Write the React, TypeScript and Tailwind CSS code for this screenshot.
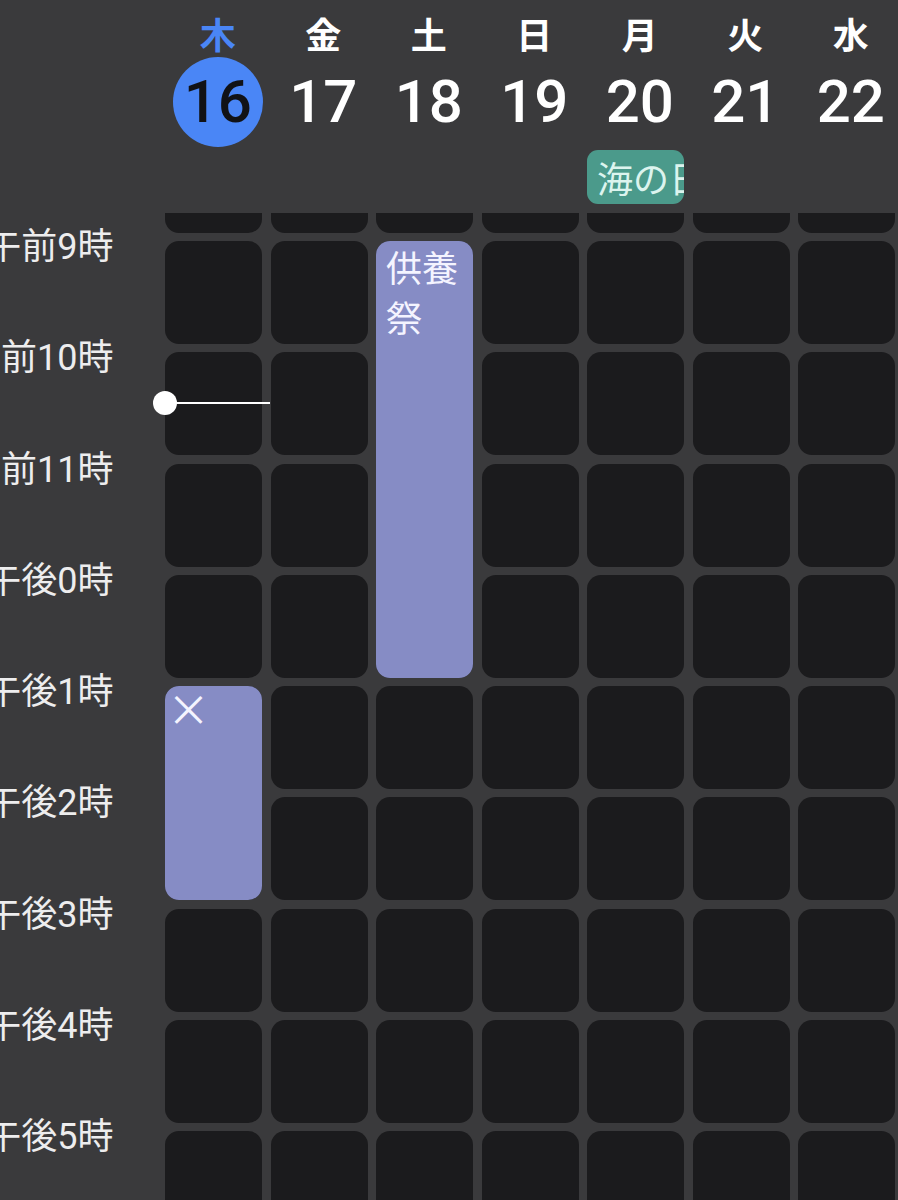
import React from "react"

// 週表示カレンダー（ダーク）
const DAYS = [
  { name: "木", date: 16, today: true },
  { name: "金", date: 17 },
  { name: "土", date: 18 },
  { name: "日", date: 19 },
  { name: "月", date: 20, holiday: "海の日" },
  { name: "火", date: 21 },
  { name: "水", date: 22 },
]

const HOURS = [
  "午前8時", "午前9時", "午前10時", "午前11時", "午後0時",
  "午後1時", "午後2時", "午後3時", "午後4時", "午後5時", "午後6時",
]

const JP = "font-['Roboto','Noto_Sans_CJK_JP',sans-serif]"

function DayHeader() {
  return (
    <div className="h-[213px] pl-[165px]">
      <div className="grid grid-cols-[repeat(7,105.5px)]">
        {DAYS.map((d) => (
          <div key={d.date} className="flex flex-col items-center">
            <div
              className={`mt-[13px] h-[40px] text-[36px] leading-[40px] font-bold font-['Noto_Sans_CJK_JP',sans-serif] ${
                d.today ? "text-[#4a86f6]" : "text-white"
              }`}
            >
              {d.name}
            </div>
            <div
              className={`mt-[4px] flex h-[90px] w-[90px] items-center justify-center rounded-full text-[60px] leading-[90px] font-medium font-['Roboto',sans-serif] ${
                d.today ? "bg-[#4a86f6] text-[#111216]" : "text-white"
              }`}
            >
              {d.date}
            </div>
          </div>
        ))}
      </div>
      <div className="mt-[3px] grid grid-cols-[repeat(7,105.5px)]">
        {DAYS.map((d) => (
          <div key={d.date} className="h-[54px]">
            {d.holiday && (
              <div className="h-[54px] w-[97px] overflow-hidden whitespace-nowrap rounded-[11px] bg-[#4b9a8b] pl-[10px] text-[36px] leading-[54px] text-[#dcf4ee] font-['Noto_Sans_CJK_JP',sans-serif]">
                {d.holiday}
              </div>
            )}
          </div>
        ))}
      </div>
    </div>
  )
}

function TimeGrid() {
  return (
    <div className="relative h-[987px] overflow-hidden">
      <div className="relative mt-[-83.25px]">
        <div className="grid grid-cols-[156.5px_repeat(7,97px)] auto-rows-[103px] gap-x-[8.5px] gap-y-[8.25px]">
          {HOURS.map((h) => (
            <React.Fragment key={h}>
              {/* はみ出した分は左へ */}
              <div className={`-mt-[14px] flex h-[40px] justify-end whitespace-nowrap pr-[43px] text-[36px] leading-[40px] text-[#ededee] ${JP}`}>
                <span className="shrink-0">{h}</span>
              </div>
              {DAYS.map((d) => (
                <div key={d.date} className="rounded-[14px] bg-[#1b1b1d]" />
              ))}
            </React.Fragment>
          ))}
        </div>

        {/* 予定 */}
        <div className="absolute inset-0 grid grid-cols-[156.5px_repeat(7,97px)] auto-rows-[103px] gap-x-[8.5px] gap-y-[8.25px]">
          <div className="col-start-4 row-start-2 row-span-4 overflow-hidden rounded-[14px] bg-[#868cc5] pl-[10px] pr-[8px] text-[36px] leading-[50px] text-[#f4f4ff] font-['Noto_Sans_CJK_JP',sans-serif]">
            供養祭
          </div>
          <div className="col-start-2 row-start-6 row-span-2 overflow-hidden rounded-[14px] bg-[#868cc5] pl-[2px] text-[43px] leading-[42px] text-[#f4f4ff] font-['Noto_Sans_CJK_JP',sans-serif]">
            ×
          </div>
        </div>
      </div>

      {/* 現在時刻 */}
      <div className="absolute left-[165px] top-[189px] h-[2px] w-[105px] bg-white" />
      <div className="absolute left-[153px] top-[178px] h-[24px] w-[24px] rounded-full bg-white" />
    </div>
  )
}

export default function App() {
  return (
    <div className="h-[1200px] w-[898px] overflow-hidden bg-[#3a3a3c]">
      <DayHeader />
      <TimeGrid />
    </div>
  )
}
